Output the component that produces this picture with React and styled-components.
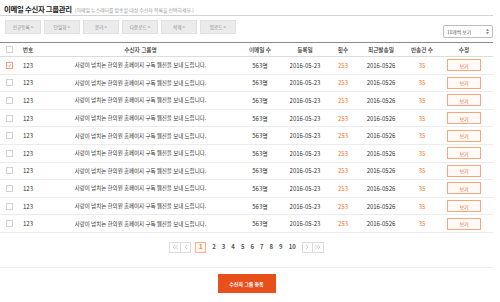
import React from "react";
import styled, { createGlobalStyle } from "styled-components";

const GlobalStyle = createGlobalStyle`
  html, body { margin: 0; padding: 0; background: #fff; }
  body { font-family: "Noto Sans CJK KR", "Noto Sans", sans-serif; color: #333; }
`;

const Page = styled.div`
  width: 493px;
`;

const TitleBar = styled.div`
  display: flex;
  align-items: baseline;
  gap: 3px;
  height: 16px;
  box-sizing: border-box;
  padding: 4px 0 0 4px;
  border-bottom: 1px solid #d4d4d4;
`;

const Title = styled.h1`
  margin: 0;
  font-size: 7.4px;
  line-height: 9px;
  font-weight: 700;
  letter-spacing: -0.3px;
  color: #222;
`;

const SubTitle = styled.span`
  font-size: 4.9px;
  line-height: 9px;
  color: #999;
`;

const Toolbar = styled.div`
  display: flex;
  justify-content: space-between;
  align-items: flex-start;
  margin-top: 4px;
  padding-left: 5px;
`;

const ButtonGroup = styled.div`
  display: flex;
  gap: 3px;
`;

const ToolButton = styled.button`
  width: 36px;
  height: 14px;
  padding: 0;
  box-sizing: border-box;
  background: #ebebeb;
  border: 1px solid #e1e1e1;
  font-family: inherit;
  font-size: 4.6px;
  color: #888;
  display: flex;
  align-items: center;
  justify-content: center;
`;

const SelectBox = styled.div`
  width: 50px;
  height: 13px;
  margin-top: 5px;
  box-sizing: border-box;
  border: 1px solid #bdbdbd;
  border-radius: 2px;
  padding: 0 3px;
  display: flex;
  align-items: center;
  justify-content: space-between;
  font-size: 4.8px;
  color: #555;
`;

const Table = styled.div`
  margin-top: 4px;
  border-top: 1.5px solid #8a8a8a;
`;

const Row = styled.div`
  display: grid;
  grid-template-columns: 18px 20px 205px 34px 56px 20px 56px 26px 58px;
  align-items: center;
  justify-items: center;
  height: ${(p) => (p.$head ? "14px" : "17.6px")};
  box-sizing: border-box;
  border-bottom: 1px solid ${(p) => (p.$head ? "#dcdcdc" : "#ececec")};
`;

const HeadCell = styled.div`
  font-size: 5.7px;
  font-weight: 500;
  color: #333;
  white-space: nowrap;
`;

const Cell = styled.div`
  font-size: ${(p) => (p.$kr ? "5.5px" : "6px")};
  color: ${(p) => (p.$accent ? "#f0782e" : "#333")};
  white-space: nowrap;
`;

const Check = styled.span`
  width: 7px;
  height: 7px;
  box-sizing: border-box;
  border: 1px solid ${(p) => (p.$on ? "#f4a27a" : "#d2d2d2")};
  background: #fff;
  display: flex;
  align-items: center;
  justify-content: center;
`;

const ViewButton = styled.button`
  width: 34px;
  height: 12px;
  padding: 0;
  box-sizing: border-box;
  border: 1px solid #f5a67c;
  background: #fffaf6;
  font-family: inherit;
  font-size: 5px;
  color: #e4622a;
  display: flex;
  align-items: center;
  justify-content: center;
`;

const Pagination = styled.div`
  display: flex;
  justify-content: center;
  align-items: center;
  gap: 6px;
  margin-top: 9px;
  height: 11px;
`;

const ArrowGroup = styled.div`
  display: flex;
  border: 1px solid #dcdcdc;
  height: 11px;
  box-sizing: border-box;
  margin: ${(p) => (p.$left ? "0 -2px 0 0" : "0")};
`;

const ArrowCell = styled.span`
  width: 9.5px;
  display: flex;
  align-items: center;
  justify-content: center;
  & + & { border-left: 1px solid #dcdcdc; }
`;

const PageNum = styled.span`
  font-size: 6px;
  font-weight: 700;
  line-height: 1;
  color: ${(p) => (p.$active ? "#f0823f" : "#555")};
  ${(p) =>
    p.$active &&
    `
    width: 11px; height: 11px; box-sizing: border-box;
    border: 1px solid #f7b48e; background: #fff6f0;
    display: flex; align-items: center; justify-content: center;
  `}
`;

const Footer = styled.div`
  margin-top: 14px;
  border-top: 1px solid #eeeeee;
  display: flex;
  justify-content: center;
  padding-top: 6px;
`;

const PrimaryButton = styled.button`
  width: 58px;
  height: 19px;
  padding: 0;
  border: none;
  background: #e8501b;
  color: #fff;
  font-family: inherit;
  font-size: 5px;
  font-weight: 700;
`;

const Chevron = ({ dir = "left", double }) => (
  <svg width="6" height="6" viewBox="0 0 6 6" fill="none" stroke="#b8b8b8" strokeWidth="0.7">
    {dir === "left" ? (
      double ? (
        <>
          <path d="M3 1 L1 3 L3 5" />
          <path d="M5.5 1 L3.5 3 L5.5 5" />
        </>
      ) : (
        <path d="M4 1 L2 3 L4 5" />
      )
    ) : double ? (
      <>
        <path d="M0.5 1 L2.5 3 L0.5 5" />
        <path d="M3 1 L5 3 L3 5" />
      </>
    ) : (
      <path d="M2 1 L4 3 L2 5" />
    )}
  </svg>
);

const tools = ["신규등록", "단일화", "분리", "다운로드", "삭제", "업로드"];
const heads = ["번호", "수신자 그룹명", "이메일 수", "등록일", "횟수", "최근발송일", "반송건 수", "수정"];
const rows = Array.from({ length: 10 }, (_, i) => ({ checked: i === 0 }));

export default function App() {
  return (
    <Page>
      <GlobalStyle />
      <TitleBar>
        <Title>이메일 수신자 그룹관리</Title>
        <SubTitle>(이메일 뉴스레터를 발송할 대상 수신자 목록을 선택하세요.)</SubTitle>
      </TitleBar>
      <Toolbar>
        <ButtonGroup>
          {tools.map((t) => (
            <ToolButton key={t}>{t} &gt;</ToolButton>
          ))}
        </ButtonGroup>
        <SelectBox>
          <span>10개씩 보기</span>
          <svg width="3" height="5" viewBox="0 0 3 5" fill="#666">
            <path d="M1.5 0 L3 1.8 L0 1.8 Z" />
            <path d="M1.5 5 L3 3.2 L0 3.2 Z" />
          </svg>
        </SelectBox>
      </Toolbar>
      <Table>
        <Row $head>
          <Check />
          {heads.map((h) => (
            <HeadCell key={h}>{h}</HeadCell>
          ))}
        </Row>
        {rows.map((r, i) => (
          <Row key={i}>
            <Check $on={r.checked}>
              {r.checked && (
                <svg width="5" height="5" viewBox="0 0 5 5" fill="none" stroke="#f07a3a" strokeWidth="0.8">
                  <path d="M1 2.6 L2 3.6 L4 1.2" />
                </svg>
              )}
            </Check>
            <Cell>123</Cell>
            <Cell $kr>사랑이 넘치는 한의원 홈페이지 구독 웹진을 보내 드립니다.</Cell>
            <Cell>563명</Cell>
            <Cell>2016-05-23</Cell>
            <Cell $accent>253</Cell>
            <Cell>2016-0526</Cell>
            <Cell $accent>35</Cell>
            <ViewButton>보기</ViewButton>
          </Row>
        ))}
      </Table>
      <Pagination>
        <ArrowGroup $left>
          <ArrowCell><Chevron dir="left" double /></ArrowCell>
          <ArrowCell><Chevron dir="left" /></ArrowCell>
        </ArrowGroup>
        {[1, 2, 3, 4, 5, 6, 7, 8, 9, 10].map((n) => (
          <PageNum key={n} $active={n === 1}>{n}</PageNum>
        ))}
        <ArrowGroup>
          <ArrowCell><Chevron dir="right" /></ArrowCell>
          <ArrowCell><Chevron dir="right" double /></ArrowCell>
        </ArrowGroup>
      </Pagination>
      <Footer>
        <PrimaryButton>수신자 그룹 등록</PrimaryButton>
      </Footer>
    </Page>
  );
}
